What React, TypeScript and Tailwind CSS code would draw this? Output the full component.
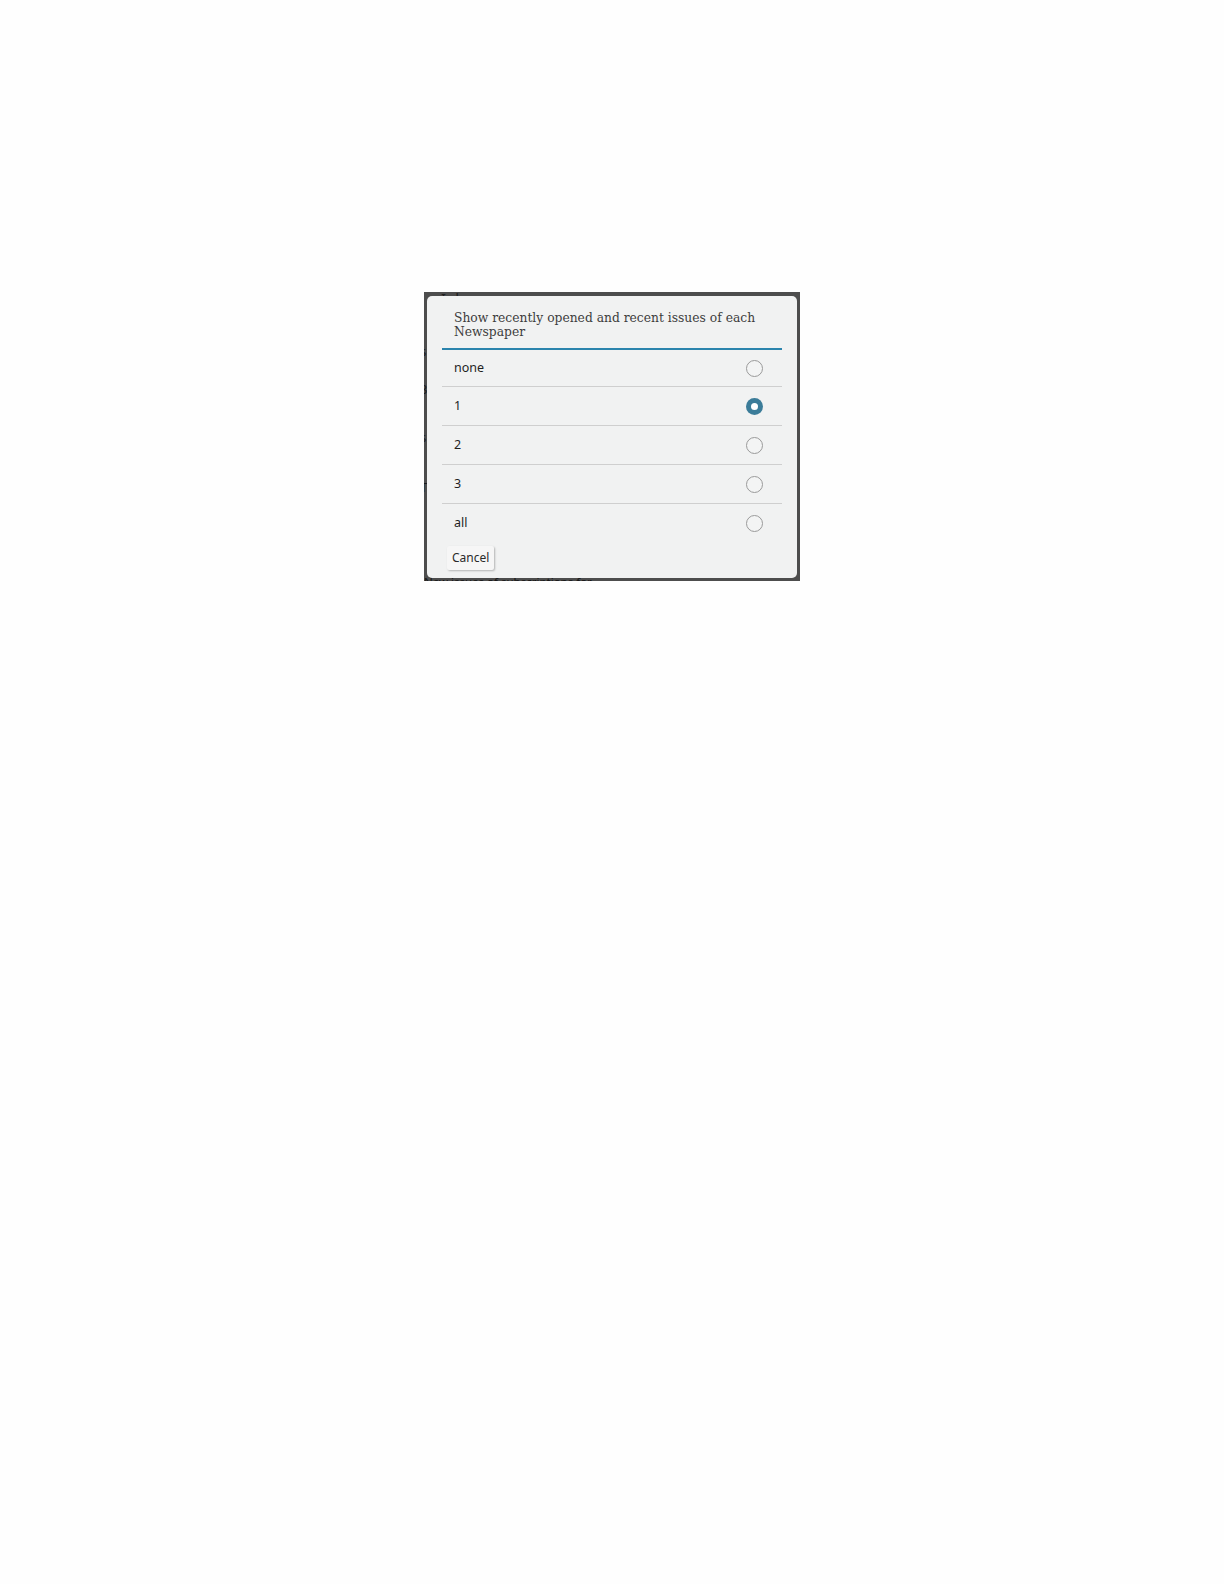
import { useState } from "react"

const options = ["none", "1", "2", "3", "all"]

// bits of the list behind the dialog that peek out at the left edge
const peeks = [
  { top: "top-[52px]", ch: "s" },
  { top: "top-[90px]", ch: "3" },
  { top: "top-[138px]", ch: "s" },
  { top: "top-[188px]", ch: "T" },
  { top: "top-[238px]", ch: "i" },
]

function Radio({ checked }: { checked: boolean }) {
  if (checked) {
    return (
      <span className="flex h-[17px] w-[17px] items-center justify-center rounded-full bg-[#3b7c99]">
        <span className="h-[7px] w-[7px] rounded-full bg-white" />
      </span>
    )
  }
  return <span className="block h-[17px] w-[17px] rounded-full border border-[#9a9a9a] bg-[#f3f4f4]" />
}

export default function App() {
  const [value, setValue] = useState("1")

  return (
    <div className="min-h-[1584px] w-full bg-[#fefefe] pl-[424px] pt-[292px]">
      {/* dimmed screen behind the dialog */}
      <div className="relative h-[289px] w-[376px] overflow-hidden bg-[#4d4d4d] font-['Noto_Sans',sans-serif]">
        <div className="pl-[17px] text-[15px] leading-[12px] text-[#1e1e1e]">Inbox</div>
        {peeks.map((p) => (
          <span key={p.top} className={`absolute left-[-4px] ${p.top} text-[13px] leading-[14px] text-[#1a1a1a]`}>
            {p.ch}
          </span>
        ))}
        <div className="absolute bottom-[-7px] left-0 text-[11.5px] leading-[12px] text-[#141414]">
          New issues of subscriptions for
        </div>

        {/* dialog */}
        <div className="absolute left-[3px] top-[4px] h-[282px] w-[370px] rounded-[5px] bg-[#f1f2f2] px-[15px]">
          <div className="border-b-2 border-[#2b84ad] px-3 pb-[9px] pt-[15px] font-['DejaVu_Serif',serif] text-[12.3px] leading-[14px] text-[#3d3d3d]">
            Show recently opened and recent issues of each Newspaper
          </div>
          <div className="flex flex-col">
            {options.map((opt, i) => (
              <button
                key={opt}
                onClick={() => setValue(opt)}
                className={`flex items-center justify-between pl-3 pr-[19px] text-left text-[12.5px] text-[#1f1f1f] ${
                  i === 0 ? "h-[37px]" : "h-[39px]"
                } ${i < options.length - 1 ? "border-b border-[#cfcfcf]" : ""}`}
              >
                <span>{opt}</span>
                <Radio checked={value === opt} />
              </button>
            ))}
          </div>
          <div className="pl-[5px] pt-[1px]">
            <button className="h-[24px] rounded-[2px] bg-[#f6f6f6] px-[5px] text-[12px] text-[#2a2a2a] shadow-[1px_1px_2px_rgba(0,0,0,0.25)]">
              Cancel
            </button>
          </div>
        </div>
      </div>
    </div>
  )
}
